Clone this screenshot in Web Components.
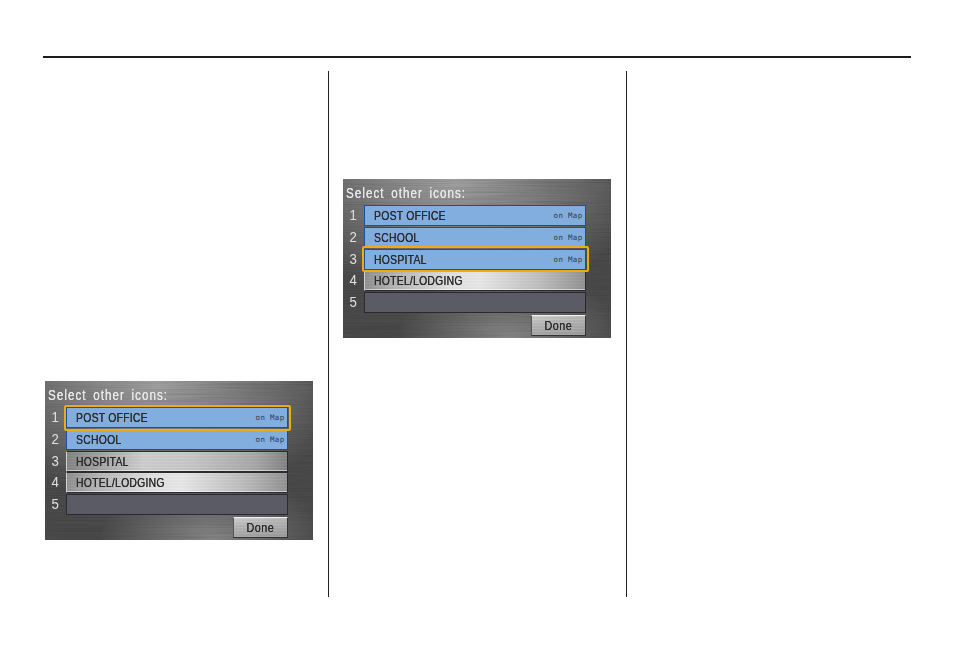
<!DOCTYPE html>
<html><head><meta charset="utf-8">
<style>
html,body{margin:0;background:#fff}
body{width:954px;height:651px;overflow:hidden}
</style></head><body>
<manual-page>
  <nav-screen slot="a">
    <nav-row n="1" state="on" focus>POST OFFICE</nav-row>
    <nav-row n="2" state="on">SCHOOL</nav-row>
    <nav-row n="3" tone="dim">HOSPITAL</nav-row>
    <nav-row n="4">HOTEL/LODGING</nav-row>
    <nav-row n="5" state="empty"></nav-row>
  </nav-screen>
  <nav-screen slot="b">
    <nav-row n="1" state="on">POST OFFICE</nav-row>
    <nav-row n="2" state="on">SCHOOL</nav-row>
    <nav-row n="3" state="on" focus>HOSPITAL</nav-row>
    <nav-row n="4">HOTEL/LODGING</nav-row>
    <nav-row n="5" state="empty"></nav-row>
  </nav-screen>
</manual-page>
<script>
class ManualPage extends HTMLElement{
  constructor(){super();this.attachShadow({mode:'open'}).innerHTML=`
  <style>
  :host{display:block;padding:56px 43px 0}
  .rule{height:2.4px;background:#1d1b1c}
  .cols{display:grid;grid-template-columns:286px 298px 284px;margin-top:13px;height:526px}
  .col{box-sizing:border-box}
  .a{padding:310px 0 0 2px;border-right:1.4px solid #231f20}
  .b{padding:108px 0 0 14px;border-right:1.4px solid #231f20}
  </style>
  <div class="rule"></div>
  <div class="cols">
    <div class="col a"><slot name="a"></slot></div>
    <div class="col b"><slot name="b"></slot></div>
    <div class="col c"></div>
  </div>`;}
}
let uid=0;
class NavScreen extends HTMLElement{
  constructor(){super();const id='bm'+(++uid);this.attachShadow({mode:'open'}).innerHTML=`
  <style>
  :host{display:block;position:relative;width:268px;height:159px;overflow:hidden;
    font-family:"Liberation Sans",Arial,sans-serif;background:#555}
  svg.bg{position:absolute;inset:0;width:100%;height:100%}
  .body{position:relative;box-sizing:border-box;height:100%;padding:5px 0 0 0}
  .title{height:21px;line-height:19px;padding-left:3px;font-size:14.5px;color:#e8e8e8;white-space:nowrap}
  .title span{display:inline-block;transform:scaleX(.8);transform-origin:left center;letter-spacing:1.3px;word-spacing:3px;text-shadow:.15px 0 0 currentColor}
  .rows{display:grid;grid-auto-rows:21px;row-gap:.6px;padding-right:25px}
  .foot{display:flex;justify-content:flex-end;padding:2px 25px 0 0}
  .done{box-sizing:border-box;width:55px;height:21px;text-align:center;line-height:19px;font-size:13.5px;color:#2a2a2a;
    background:
      repeating-linear-gradient(180deg,rgba(255,255,255,.04) 0 1px,rgba(0,0,0,.03) 1px 3px),
      linear-gradient(172deg,#d2d2d2 0,#bababa 30%,#a8a8a8 70%,#9b9b9b 100%);
    border:1px solid #333;border-top-color:#efefef;border-left-color:#555}
  .done span{display:inline-block;transform:scaleX(.8);letter-spacing:.6px;text-shadow:.15px 0 0 currentColor}
  </style>
  <svg class="bg" viewBox="0 0 268 159" preserveAspectRatio="none" aria-hidden="true">
    <defs>
      <filter id="${id}" x="0" y="0" width="100%" height="100%">
        <feTurbulence type="fractalNoise" baseFrequency="0.012 1.1" numOctaves="2" seed="4"/>
        <feColorMatrix values="0 0 0 0 0  0 0 0 0 0  0 0 0 0 0  1.3 0 0 0 -.5"/>
      </filter>
      <radialGradient id="${id}g" cx=".42" cy=".02" r=".72">
        <stop offset="0" stop-color="#a0a0a0"/><stop offset=".6" stop-color="#6e6e6e"/><stop offset="1" stop-color="#4a4a4a"/>
      </radialGradient>
      <radialGradient id="${id}h" cx=".62" cy="1" r=".42">
        <stop offset="0" stop-color="#a0a0a0" stop-opacity=".7"/><stop offset="1" stop-color="#a0a0a0" stop-opacity="0"/>
      </radialGradient>
    </defs>
    <rect width="268" height="159" fill="url(#${id}g)"/>
    <rect width="268" height="159" fill="url(#${id}h)"/>
    <rect width="268" height="159" filter="url(#${id})" opacity=".17"/>
  </svg>
  <div class="body">
    <div class="title"><span>Select other icons:</span></div>
    <div class="rows"><slot></slot></div>
    <div class="foot"><div class="done"><span>Done</span></div></div>
  </div>`;}
}
class NavRow extends HTMLElement{
  constructor(){super();this.attachShadow({mode:'open'}).innerHTML=`
  <style>
  :host{display:grid;grid-template-columns:21px 1fr;min-width:0;height:21px;color:#2a2a2a;font-size:13px}
  .n{text-align:center;line-height:20px;font-size:15px;color:#e0e0e0}
  .n span{display:inline-block;transform:scaleX(.88)}
  .bar{position:relative;box-sizing:border-box;height:21px;display:flex;align-items:center;justify-content:space-between;
    padding:0 3px 0 9px;white-space:nowrap;border:1px solid #2c2c30;border-left-color:#d0d0d0;
    box-shadow:inset 0 -1px 0 rgba(255,255,255,.5);
    background:
      repeating-linear-gradient(180deg,rgba(255,255,255,.04) 0 1px,rgba(0,0,0,.02) 1px 3px),
      linear-gradient(96deg,#8f8f8f 0,#b5b5b5 14%,#e0e0e0 38%,#e8e8e8 52%,#bdbdbd 80%,#929292 100%)}
  .t{display:inline-block;transform:scaleX(.8);transform-origin:left center;letter-spacing:.3px;text-shadow:.15px 0 0 currentColor}
  :host([tone=dim]) .bar{background:
      repeating-linear-gradient(180deg,rgba(255,255,255,.04) 0 1px,rgba(0,0,0,.02) 1px 3px),
      linear-gradient(96deg,#838383 0,#a4a4a4 15%,#cecece 35%,#c8c8c8 55%,#a8a8a8 85%,#838383 100%)}
  :host([state=on]) .bar{background:#81aedf;border:1.5px solid #1c4f9b;box-shadow:none;padding:0 2.5px 0 8.5px}
  :host([state=empty]) .bar{background:#5b5b66;border-color:#2a2a2d;box-shadow:none}
  .map{display:none;font-size:7.5px;letter-spacing:.3px;font-family:"DejaVu Sans Mono","Liberation Mono",monospace;color:#333a44}
  :host([state=on]) .map{display:inline}
  .focus{display:none;position:absolute;inset:-3.5px;border:2.5px solid #efab14;border-radius:2px;pointer-events:none}
  :host([focus]) .focus{display:block}
  :host([focus]){position:relative;z-index:1}
  </style>
  <div class="n"><span></span></div>
  <div class="bar"><span class="t"><slot></slot></span><span class="map">on Map</span><div class="focus"></div></div>`;
  this.shadowRoot.querySelector('.n span').textContent=this.getAttribute('n')||'';}
}
customElements.define('manual-page',ManualPage);
customElements.define('nav-screen',NavScreen);
customElements.define('nav-row',NavRow);
</script>
</body></html>
